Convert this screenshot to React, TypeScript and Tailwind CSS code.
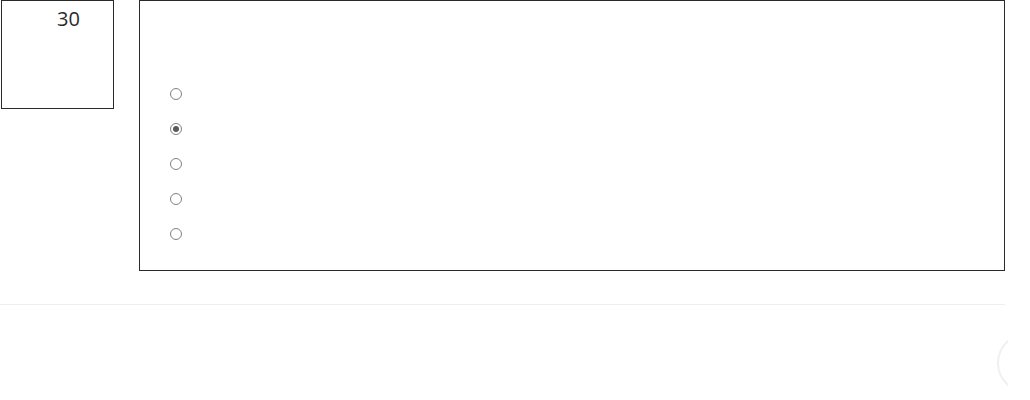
const options = ["a", "b", "c", "d", "e"];

export default function App() {
  return (
    <div className="relative h-[400px] w-[1008px] overflow-hidden bg-white font-['Open_Sans',sans-serif] text-[#2a2a2a]">
      <div className="flex items-start">
        <div className="ml-px flex h-[109px] w-[113px] justify-center border border-[#2a2a2a] pl-[22px] pt-[5px] text-[20px] leading-[26px]">
          30
        </div>
        <div className="ml-[25px] h-[271px] w-[866px] border border-[#2a2a2a] pl-[30px] pt-[87px]">
          <div className="flex flex-col gap-[23px]">
            {options.map((o, i) => (
              <label key={o} className="flex h-[12px] items-center">
                <span className="flex h-[12px] w-[12px] items-center justify-center rounded-full border border-[#808080] bg-white">
                  {i === 1 && <span className="h-[6px] w-[6px] rounded-full bg-[#5a5a5a]" />}
                </span>
              </label>
            ))}
          </div>
        </div>
      </div>
      <div className="mt-[33px] h-px w-[1005px] bg-[#eee]" />
      <div className="absolute left-[997px] top-[333px] h-[60px] w-[60px] rounded-full border-2 border-[#f0f0f0]" />
    </div>
  );
}
